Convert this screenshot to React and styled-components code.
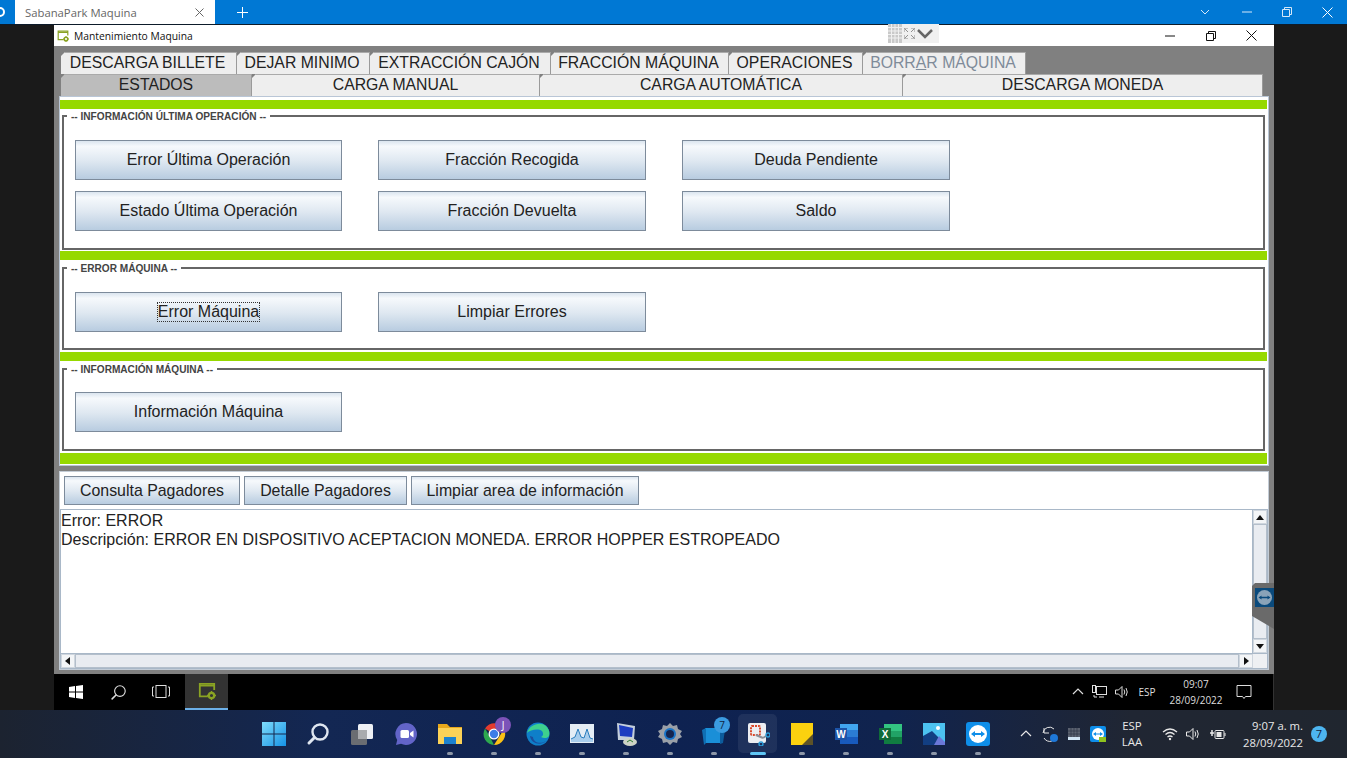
import React from "react";
import styled, { createGlobalStyle } from "styled-components";

const Global = createGlobalStyle`
  html, body { margin: 0; padding: 0; background: #1a1a1a; }
  * { box-sizing: border-box; }
  body { font-family: "Liberation Sans", Arial, sans-serif; overflow: hidden; }
`;

const Page = styled.div`
  width: 1347px; height: 758px; display: flex; flex-direction: column;
  overflow: hidden; position: relative; background: #1a1a1a;
`;

/* ---------- browser strip ---------- */
const BrowserBar = styled.div`
  height: 25px; display: flex; background: #0078d4; border-bottom: 1px solid #0d1b2a;
  flex: none;
`;
const FavSlot = styled.div`
  width: 15px; background: #0078d4; border-bottom-right-radius: 6px; display: flex;
  align-items: center; overflow: hidden; color: #fff;
`;
const BrowserTab = styled.div`
  width: 200px; background: #fff; display: flex; align-items: center; padding: 0 11px 0 10px;
  justify-content: space-between; font: 11.3px "Open Sans", sans-serif; color: #666;
  margin-right: 17px; position: relative;
`;
const BarIcon = styled.div`
  width: ${(p) => p.$w || 40}px; display: flex; align-items: center; justify-content: center;
  padding-right: ${(p) => p.$pr || 0}px;
  color: ${(p) => p.$c || "#d6e8f8"};
`;
const Spacer = styled.div`flex: 1;`;

/* ---------- desktop / remote window ---------- */
const Desktop = styled.div`
  flex: 1; padding-left: 54px; display: flex; min-height: 0;
`;
const Remote = styled.div`
  width: 1220px; display: flex; flex-direction: column; position: relative;
`;
const TitleBar = styled.div`
  height: 21px; background: #fff; display: flex; align-items: center; padding-left: 3px; flex: none;
  font: 10.3px "Open Sans", sans-serif; color: #111; gap: 5px;
`;
const TitleControls = styled.div`
  margin-left: auto; display: flex; color: #111; padding-right: 2px;
`;
const ControlSlot = styled.div`
  width: 41px; height: 20px; display: flex; align-items: center; justify-content: center;
`;
const RemoteToolbar = styled.div`
  position: absolute; left: 834px; top: -1px; width: 51px; height: 19px; background: #f0f0f0;
  display: flex; align-items: center; gap: 2px; color: #666;
`;
const Body = styled.div`
  height: 628px; background: #808080; padding-top: 6px; flex: none;
`;
const TabRow = styled.div`
  display: flex; height: 22px; padding-left: 7px;
`;
const Tab = styled.div`
  width: ${(p) => p.$w}px; height: 22px; padding-right: ${(p) => p.$pr || 0}px;
  background: ${(p) => (p.$active ? "#bcbcbc" : "#eeeeee")};
  color: ${(p) => (p.$off ? "#7f8b99" : "#222")};
  border-right: 1px solid #9a9a9a; border-top: 1px solid #aaa;
  clip-path: polygon(4px 0, 100% 0, 100% 100%, 0 100%, 0 4px);
  font-size: 15.8px; line-height: 20px; text-align: center; white-space: nowrap;
  u { text-decoration-thickness: 1px; }
`;
const Panel = styled.div`
  margin-left: 5px; width: 1210px; background: #fff; border: 1px solid #b9c6d6;
  padding: 3px 1px 1px 0; display: flex; flex-direction: column;
`;
const Band = styled.div`
  height: ${(p) => p.$h || 9}px; background: #96d900; flex: none;
`;
const Group = styled.fieldset`
  margin: ${(p) => p.$mt}px 2px ${(p) => p.$mb}px 2px; min-width: 0;
  border: 2px solid #666; padding: ${(p) => p.$pt}px 10px ${(p) => p.$pb}px 11px;
  display: grid; grid-template-columns: 267px 268px 268px; column-gap: 36px; row-gap: 11px;
  justify-content: start;
`;
const Legend = styled.legend`
  font-size: 10.1px; height: 12px; line-height: 14px; font-weight: bold; color: #444; padding: 0 4px; margin-left: -8px;
  white-space: nowrap;
`;
const Button = styled.div`
  width: ${(p) => (p.$w ? `${p.$w}px` : "100%")}; height: ${(p) => p.$h || 40}px;
  border: 1px solid #7d8b9b;
  background: linear-gradient(#dbe5ef 0%, #f6f9fc 14%, #dfe8f1 52%, #b8cce0 100%);
  display: flex; align-items: center; justify-content: center;
  font-size: ${(p) => p.$fs || 16}px; color: #222; white-space: nowrap; flex: none;
`;
const Focused = styled.span`
  outline: 1px dotted #333; line-height: 18px;
`;
const Lower = styled.div`
  margin: 5px 0 0 5px; width: 1210px; height: 199px; background: #fff;
  border: 1px solid #c3ccd6; padding-top: 4px; display: flex; flex-direction: column;
`;
const ActionRow = styled.div`
  display: flex; gap: 4px; padding-left: 4px; height: 29px; flex: none;
`;
const Frame = styled.div`
  margin: 4px 0 0 0; flex: 1; display: grid; grid-template-columns: 1fr 14px; grid-template-rows: 1fr 14px;
  border: 1px solid #a9b8c8; min-height: 0;
`;
const Output = styled.div`
  font-size: 16px; line-height: 19px; color: #222; padding: 1px 0 0 0; white-space: pre;
  border-bottom: 1px solid #a9b8c8; border-right: 1px solid #a9b8c8;
`;
const VBar = styled.div`
  display: grid; grid-template-rows: 14px 1fr 14px; background: #e9ecf0;
  border-bottom: 1px solid #a9b8c8;
`;
const HBar = styled.div`
  display: grid; grid-template-columns: 14px 1fr 14px; background: #e9ecf0;
`;
const ScrollButton = styled.div`
  display: flex; align-items: center; justify-content: center; background: #f3f5f7;
  border: 1px solid #cfd6de;
`;
const Thumb = styled.div`
  background: #e9ecf1; border: 1px solid #b4bfcb;
`;
const Corner = styled.div`background: #eef0f3;`;

/* ---------- teamviewer side handle ---------- */
const SideHandle = styled.div`
  position: absolute; left: 1198px; top: 558px; width: 22px; height: 46px;
  background: #6a6a6a; clip-path: polygon(3px 0, 100% 0, 100% 100%, 0 72%, 0 3px);
  padding: 5px 0 0 3px;
`;

/* ---------- inner taskbar ---------- */
const InnerBar = styled.div`
  height: 36px; background: #000; display: flex; align-items: center; flex: none; color: #ddd;
  border-right: 1px solid #333;
`;
const InnerSlot = styled.div`
  width: ${(p) => p.$w || 43}px; height: 36px; flex: none; display: flex; align-items: center; justify-content: center;
  margin-left: ${(p) => p.$ml || 0}px;
  background: ${(p) => (p.$active ? "#333" : "transparent")};
  border-bottom: ${(p) => (p.$active ? "2px solid #6cb0e8" : "0")};
`;
const InnerTray = styled.div`
  margin-left: auto; display: flex; align-items: center; height: 36px; font: 10px "Open Sans", sans-serif; color: #ddd;
`;
const TrayCell = styled.div`
  width: ${(p) => p.$w}px; flex: none; display: flex; flex-direction: column; align-items: center; justify-content: center;
  line-height: ${(p) => p.$lh || 15}px; white-space: nowrap;
`;

/* ---------- windows 11 taskbar ---------- */
const Win11Bar = styled.div`
  height: 48px; flex: none; display: flex; align-items: center; padding-left: 252px;
  background: linear-gradient(90deg, #1c2330 0%, #132753 24%, #0e2251 50%, #10234e 66%, #202633 84%, #20262f 100%);
  color: #e8e8e8;
`;
const Dock = styled.div`display: flex;`;
const DockItem = styled.div`
  width: 44px; height: 48px; position: relative; display: flex; align-items: center; justify-content: center;
  &::before {
    content: ""; position: absolute; left: 2px; right: 3px; top: 4px; bottom: 5px; border-radius: 5px;
    background: ${(p) => (p.$active ? "rgba(255,255,255,.07)" : "transparent")};
  }
  & > svg { position: relative; }
`;
const RunDot = styled.span`
  position: absolute; bottom: 3px; left: 50%; transform: translateX(-50%);
  width: ${(p) => (p.$active ? 16 : 6)}px; height: 3px; border-radius: 2px;
  background: ${(p) => (p.$active ? "#5fc6f5" : "#8d97a8")};
`;
const Badge = styled.span`
  position: absolute; top: ${(p) => p.$t}px; right: ${(p) => p.$r}px; width: 16px; height: 16px; border-radius: 50%;
  background: ${(p) => p.$bg}; color: ${(p) => p.$c || "#fff"}; font: 10px/16px "Open Sans", sans-serif; text-align: center;
`;
const Tray = styled.div`
  margin-left: auto; display: flex; align-items: center; height: 48px; padding-right: 20px;
  font: 11.4px "Open Sans", sans-serif; color: #e8e8e8;
`;
const Clock = styled.div`
  width: 72px; text-align: right; font-size: 11.3px; line-height: 17px; white-space: nowrap; margin-right: 8px; flex: none;
`;
const Notif = styled.div`
  width: 16px; height: 16px; border-radius: 50%; background: #4db5f0; color: #11243f; font-size: 11px; line-height: 16px;
  text-align: center; flex: none;
`;

/* ---------- icons ---------- */
const Svg = ({ s = 16, w, h, children, vb }) => (
  <svg width={w || s} height={h || s} viewBox={vb || `0 0 ${s} ${s}`} fill="none" style={{ display: "block", flex: "none" }}>
    {children}
  </svg>
);
const line = { stroke: "currentColor", strokeWidth: 1 };
const Chevron = ({ up, s = 10 }) => (
  <Svg s={s} vb="0 0 10 10"><path d={up ? "M1 7l4-4 4 4" : "M1 3l4 4 4-4"} {...line} /></Svg>
);
const Minus = ({ w = 10, c }) => <Svg w={w} h={10} vb={`0 0 ${w} 10`}><path d={`M0 5h${w}`} stroke={c || "currentColor"} /></Svg>;
const Restore = () => (
  <Svg s={10}><path d="M.5 2.500h7v7h-7zM2.500 2.500v-2h7v7h-2" {...line} /></Svg>
);
const Close = ({ s = 11 }) => <Svg s={s}><path d={`M.5.5l${s - 1} ${s - 1}M${s - .5} .5l-${s - 1} ${s - 1}`} {...line} /></Svg>;
const AppGear = ({ s = 12, c = "#8aa323" }) => (
  <Svg s={20} w={s} h={s}>
    <path d="M11 16H2V2h16v7" stroke={c} strokeWidth="2" />
    <path d="M2 4h16" stroke={c} strokeWidth="2" />
    <circle cx="15" cy="15" r="3" stroke={c} strokeWidth="2.500" />
    <path d="M15 10v2M15 18v2M10 15h2M18 15h2" stroke={c} strokeWidth="1.600" />
  </Svg>
);
const TriUp = () => <Svg s={8}><path d="M4 2l4 5H0z" fill="#111" /></Svg>;
const TriDown = () => <Svg s={8}><path d="M4 7L0 2h8z" fill="#111" /></Svg>;
const TriLeft = () => <Svg s={8}><path d="M1 4l5-4v8z" fill="#111" /></Svg>;
const TriRight = () => <Svg s={8}><path d="M7 4L2 0v8z" fill="#111" /></Svg>;
const TvMark = ({ s = 24, bg = "#0e8ee9", arrow }) => (
  <Svg s={24} w={s} h={s}>
    <rect width="24" height="24" rx="3" fill={bg} />
    <circle cx="12" cy="12" r="9" fill="#fff" />
    <path d="M5 12l4-3v2h6V9l4 3-4 3v-2H9v2z" fill={arrow || bg} />
  </Svg>
);
const WinFlag = ({ s = 14, c = "#fff" }) => (
  <Svg s={14} w={s} h={s}><path d="M0 2l6-1v5.500H0zM7 .9L14 0v6.500H7zM0 7.500h6V13l-6-1zM7 7.500h7V14l-7-1z" fill={c} /></Svg>
);
const Win11 = () => (
  <Svg s={24}>
    <defs><linearGradient id="w11" x1="0" y1="0" x2="1" y2="1"><stop stopColor="#7fdcfb" /><stop offset="1" stopColor="#1592e6" /></linearGradient></defs>
    <path d="M0 0h11.500v11.500H0zM12.500 0H24v11.500H12.500zM0 12.500h11.500V24H0zM12.500 12.500H24V24H12.500z" fill="url(#w11)" />
  </Svg>
);
const SearchIcon = ({ s = 24, c = "#dfe6f0", sw = 2.400 }) => (
  <Svg s={24} w={s} h={s}><circle cx="14" cy="10" r="7.500" stroke={c} strokeWidth={sw} /><path d="M8.500 15.500L3 21" stroke={c} strokeWidth={sw + .6} strokeLinecap="round" /></Svg>
);
const TaskView11 = () => (
  <Svg s={24}><rect x="8" y="2" width="15" height="15" rx="1.500" fill="#eef0f4" /><rect x="1" y="8" width="16" height="15" rx="1.500" fill="#6a6d72" /><rect x="8" y="8" width="9" height="9" fill="#a9abae" /></Svg>
);
const Meet = () => (
  <Svg s={24}><path d="M12 1a11 11 0 1 1-5 20.800L2 23l1.200-5A11 11 0 0 1 12 1z" fill="#6264c8" /><rect x="6.500" y="8" width="8.500" height="8" rx="1.500" fill="#fff" /><path d="M16 11l3.500-2.500v7L16 13z" fill="#fff" /></Svg>
);
const Folder = () => (
  <Svg s={24}><path d="M0 2h9l3 3h12v3H0z" fill="#e8a81c" /><path d="M0 6h24v16H0z" fill="#fcd257" /><rect x="6" y="15" width="12" height="7" fill="#1d82cf" /></Svg>
);
const Chrome = () => (
  <Svg s={24}>
    <path d="M12 12L3 6.500A11 11 0 0 1 22 7H12z" fill="#e33b2e" />
    <path d="M12 23A11 11 0 0 1 3 6.500L8 15z" fill="#2da94f" />
    <path d="M22 7A11 11 0 0 1 12 23l5-8z" fill="#fbc116" />
    <circle cx="12" cy="12" r="5.500" fill="#fff" /><circle cx="12" cy="12" r="4.200" fill="#3d7de8" />
  </Svg>
);
const Edge = () => (
  <Svg s={24}>
    <circle cx="12" cy="12" r="11.500" fill="#0f7fc9" />
    <path d="M1 11C3 3 14-1 20 4c3 3 4 6 3 10-1 2-5 3-8 1 2-1 3-3 1-6-4-3-12-1-15 2z" fill="#3ed08e" />
    <path d="M7 15c0 5 7 8 13 4-5 5-15 3-16-5z" fill="#1b4e9e" />
  </Svg>
);
const Perf = () => (
  <Svg s={24}><rect y="2" width="24" height="19" fill="#e4edf5" /><path d="M1 17l4-2 3-8 3 8 3 1 3-9 3 9 3 1v3H1z" fill="#a8cdec" /><path d="M1 17l4-2 3-8 3 8 3 1 3-9 3 9 3 1" stroke="#2a7dbd" /></Svg>
);
const RemoteApp = () => (
  <Svg s={24}><path d="M3 1l18 3-1 14H4z" fill="#c3cedb" /><path d="M5 3l14 3-1 9-12-1z" fill="#1c3cc0" /><ellipse cx="16" cy="20" rx="7" ry="4" fill="#cdd3c6" /><path d="M13 20l3-2 3 2" stroke="#2d7d31" /></Svg>
);
const Settings = () => (
  <Svg s={24}>
    <path d="M12 1l3 3 4-1 1 4 4 2-2 3 2 3-4 2-1 4-4-1-3 3-3-3-4 1-1-4-4-2 2-3-2-3 4-2 1-4 4 1z" fill="#9aa0a8" />
    <circle cx="12" cy="12" r="6" fill="#1874c8" /><circle cx="12" cy="12" r="4" fill="#13254f" />
  </Svg>
);
const Store = () => (
  <Svg s={24}><path d="M3 6h15v15H3z" fill="#1a8fd8" /><path d="M0 8l4-2v15l-2 2z" fill="#0f6fb4" /><path d="M18 6l5 2-2 13-3 1z" fill="#0c5c9c" /></Svg>
);
const Snip = () => (
  <Svg s={24}>
    <rect x="2" y="1" width="18" height="20" rx="2" fill="#eceef2" />
    <rect x="5" y="4" width="9" height="9" rx="1" fill="none" stroke="#d9482b" strokeWidth="2" strokeDasharray="2 1" />
    <path d="M10 13l7 3M17 16l3-2" stroke="#8a8f98" strokeWidth="2" />
    <circle cx="22" cy="13" r="2" stroke="#2b9bd6" strokeWidth="1.400" /><circle cx="15" cy="22" r="2" stroke="#2b9bd6" strokeWidth="1.400" />
  </Svg>
);
const Sticky = () => (
  <Svg s={24}><rect x="1" y="1" width="22" height="22" fill="#fbd10f" /><path d="M23 12L12 23h11z" fill="#5d5328" /></Svg>
);
const Word = () => (
  <Svg s={24}>
    <rect x="6" y="2" width="18" height="6" fill="#41a5ee" /><rect x="6" y="8" width="18" height="7" fill="#2b7cd3" /><rect x="6" y="15" width="18" height="7" fill="#185abd" />
    <rect x="1" y="6" width="12" height="12" fill="#1c54a8" />
    <text x="7" y="16" fontSize="10" fontWeight="bold" fill="#fff" textAnchor="middle" fontFamily="Liberation Sans">W</text>
  </Svg>
);
const Excel = () => (
  <Svg s={24}>
    <rect x="6" y="2" width="18" height="7" fill="#33c481" /><rect x="6" y="9" width="18" height="6" fill="#21a366" /><rect x="6" y="15" width="18" height="7" fill="#107c41" />
    <rect x="1" y="6" width="12" height="12" fill="#0f6b39" />
    <text x="7" y="16" fontSize="10" fontWeight="bold" fill="#fff" textAnchor="middle" fontFamily="Liberation Sans">X</text>
  </Svg>
);
const Photos = () => (
  <Svg s={24}>
    <rect x="1" y="1" width="22" height="22" fill="#4cc2f0" />
    <circle cx="16" cy="6" r="2" fill="#fff" />
    <path d="M1 14l9-5 13 13v1H1z" fill="#123e82" /><path d="M12 23l5-9 6 6v3z" fill="#6b78d8" />
  </Svg>
);
const TrayChevron = () => <Svg s={12}><path d="M1 8l5-5 5 5" stroke="currentColor" strokeWidth="1.200" /></Svg>;
const Speaker = () => (
  <Svg s={16}><path d="M1.500 6h3L8 2.500v11L4.500 10h-3z" stroke="currentColor" /><path d="M10 5.500q1.500 2.500 0 5M12 4q2.500 4 0 8" stroke="currentColor" /></Svg>
);
const Wifi = () => (
  <Svg s={16}><path d="M1 6q7-6 14 0M3.500 8.500q4.500-4 9 0M5.500 11q2.500-2 5 0" stroke="currentColor" strokeWidth="1.300" /><circle cx="8" cy="13" r="1.200" fill="currentColor" /></Svg>
);
const Battery = () => (
  <Svg s={16}><path d="M0 7h4M2 4v6" stroke="currentColor" strokeWidth="1.500" /><rect x="5" y="4.500" width="9" height="8" rx="1" stroke="currentColor" /><rect x="6.500" y="6" width="5" height="5" fill="currentColor" /><path d="M15 7v3" stroke="currentColor" /></Svg>
);
const Sync = () => (
  <Svg s={18}><path d="M2 8a6.500 6.500 0 0 1 11-4M3 3v5h5M11 16a6.500 6.500 0 0 1-8-3" stroke="#e6e6e6" /><circle cx="13" cy="13" r="4" fill="#1e78d8" /></Svg>
);
const Meter = () => (
  <Svg s={14}><rect x="1" y="1" width="12" height="12" fill="#5b6270" /><path d="M1 4h12M1 7h12M4 1v12M7 1v12M10 1v12" stroke="#2a3040" strokeWidth=".6" /><rect x="1" y="10" width="12" height="3" fill="#d2e5f5" /></Svg>
);
const TvTray = () => (
  <Svg s={16}><rect width="16" height="16" rx="2" fill="#0e8ee9" /><circle cx="8" cy="8" r="6" fill="#fff" /><path d="M3 8l3-2v1.500h4V6l3 2-3 2V8.500H6V10z" fill="#0e8ee9" /><rect x="9" y="11" width="7" height="5" fill="#8fc31f" /></Svg>
);
const Network = () => (
  <Svg s={16}><rect x="4.500" y="2.500" width="10" height="8" stroke="currentColor" /><rect x=".5" y="1.500" width="3" height="7" fill="#000" stroke="currentColor" /><path d="M7 13h5M2 11v2h3" stroke="currentColor" /></Svg>
);
const Bubble = () => (
  <Svg s={16}><path d="M1 1.500h14v11H9.500L8 14.500 6.500 12.500H1z" stroke="currentColor" /></Svg>
);
const TaskView10 = () => (
  <Svg w={18} h={14} vb="0 0 18 14"><rect x="4" y=".5" width="10" height="12" stroke="#ddd" /><path d="M2 2H.5v9H2M16 2h1.500v9H16" stroke="#ddd" /></Svg>
);

const dock = [
  [Win11], [SearchIcon], [TaskView11], [Meet],
  [Folder, true], [Chrome, true, "J"], [Edge, true], [Perf, true], [RemoteApp, true], [Settings, true],
  [Store, true, "7"], [Snip, "active"], [Sticky, true], [Word, true], [Excel, true], [Photos, true],
  [TvMark, true],
];

const topTabs = [
  ["DESCARGA BILLETE", 176], ["DEJAR MINIMO", 133], ["EXTRACCIÓN CAJÓN", 181], ["FRACCIÓN MÁQUINA", 178],
  ["OPERACIONES", 134],
];

export default function App() {
  return (
    <Page>
      <Global />
      <BrowserBar>
        <FavSlot><Svg s={10}><circle cx="0" cy="5" r="4" stroke="#fff" strokeWidth="2" /></Svg></FavSlot>
        <BrowserTab>SabanaPark Maquina<Close s={9} /></BrowserTab>
        <BarIcon $w={20} $c="#fff"><Svg s={11}><path d="M5.500 0v11M0 5.500h11" stroke="currentColor" /></Svg></BarIcon>
        <Spacer />
        <BarIcon $pr={4}><Chevron /></BarIcon>
        <BarIcon><Minus /></BarIcon>
        <BarIcon><Restore /></BarIcon>
        <BarIcon $c="#fff"><Close /></BarIcon>
      </BrowserBar>
      <Desktop>
        <Remote>
          <TitleBar>
            <AppGear />Mantenimiento Maquina
            <TitleControls>
              <ControlSlot><Minus /></ControlSlot>
              <ControlSlot><Restore /></ControlSlot>
              <ControlSlot><Close /></ControlSlot>
            </TitleControls>
          </TitleBar>
          <RemoteToolbar>
            <Svg w={14} h={19} vb="0 0 14 19">
              <rect width="14" height="19" fill="#c9c9c9" />
              <path d="M3.500 0v19M7 0v19M10.500 0v19M0 3.500h14M0 7h14M0 10.500h14M0 14h14" stroke="#f0f0f0" />
            </Svg>
            <Svg s={11}><path d="M0 4V0h4M7 0h4v4M11 7v4H7M4 11H0V7M1 1l3 3M10 1L7 4M10 10L7 7M1 10l3-3" stroke="#777" strokeWidth=".8" /></Svg>
            <Svg s={16}><path d="M1 4l7 7 7-7" stroke="#666" strokeWidth="2.500" /></Svg>
          </RemoteToolbar>
          <Body>
            <TabRow>
              {topTabs.map(([t, w]) => <Tab key={t} $w={w} $pr={2}>{t}</Tab>)}
              <Tab $w={163} $pr={2} $off>BORR<u>A</u>R MÁQUINA</Tab>
            </TabRow>
            <TabRow>
              <Tab $w={191} $active>ESTADOS</Tab>
              <Tab $w={288}>CARGA MANUAL</Tab>
              <Tab $w={363}>CARGA AUTOMÁTICA</Tab>
              <Tab $w={360}>DESCARGA MONEDA</Tab>
            </TabRow>
            <Panel>
              <Band />
              <Group $mt={1} $mb={1} $pt={18} $pb={17}>
                <Legend>-- INFORMACIÓN ÚLTIMA OPERACIÓN --</Legend>
                <Button>Error Última Operación</Button>
                <Button>Fracción Recogida</Button>
                <Button>Deuda Pendiente</Button>
                <Button>Estado Última Operación</Button>
                <Button>Fracción Devuelta</Button>
                <Button>Saldo</Button>
              </Group>
              <Band />
              <Group $mt={2} $mb={2} $pt={18} $pb={16}>
                <Legend>-- ERROR MÁQUINA --</Legend>
                <Button><Focused>Error Máquina</Focused></Button>
                <Button>Limpiar Errores</Button>
              </Group>
              <Band />
              <Group $mt={2} $mb={2} $pt={17} $pb={17}>
                <Legend>-- INFORMACIÓN MÁQUINA --</Legend>
                <Button>Información Máquina</Button>
              </Group>
              <Band $h={11} />
            </Panel>
            <Lower>
              <ActionRow>
                <Button $w={176} $h={29} $fs={15.9}>Consulta Pagadores</Button>
                <Button $w={163} $h={29} $fs={15.9}>Detalle Pagadores</Button>
                <Button $w={228} $h={29} $fs={15.9}>Limpiar area de información</Button>
              </ActionRow>
              <Frame>
                <Output>{"Error: ERROR\nDescripción: ERROR EN DISPOSITIVO ACEPTACION MONEDA. ERROR HOPPER ESTROPEADO"}</Output>
                <VBar>
                  <ScrollButton><TriUp /></ScrollButton>
                  <Thumb />
                  <ScrollButton><TriDown /></ScrollButton>
                </VBar>
                <HBar>
                  <ScrollButton><TriLeft /></ScrollButton>
                  <Thumb />
                  <ScrollButton><TriRight /></ScrollButton>
                </HBar>
                <Corner />
              </Frame>
            </Lower>
          </Body>
          <SideHandle>
            <Svg s={19}>
              <rect width="19" height="19" fill="#0a4a7c" />
              <circle cx="9.500" cy="9.500" r="7.500" fill="#8aa3b8" />
              <path d="M3.500 9.500l3-2v1.300h6V7.500l3 2-3 2v-1.300h-6v1.300z" fill="#0a4a7c" />
            </Svg>
          </SideHandle>
          <InnerBar>
            <InnerSlot $w={43}><WinFlag /></InnerSlot>
            <InnerSlot $w={43}><SearchIcon s={17} c="#ddd" sw={1.600} /></InnerSlot>
            <InnerSlot $w={42}><TaskView10 /></InnerSlot>
            <InnerSlot $w={43} $ml={3} $active><AppGear s={18} /></InnerSlot>
            <InnerTray>
              <TrayCell $w={20}><TrayChevron /></TrayCell>
              <TrayCell $w={24}><Network /></TrayCell>
              <TrayCell $w={20}><Speaker /></TrayCell>
              <TrayCell $w={30}>ESP</TrayCell>
              <TrayCell $w={68} $lh={16}><span>09:07</span><span>28/09/2022</span></TrayCell>
              <TrayCell $w={28}><Bubble /></TrayCell>
              <TrayCell $w={15} />
            </InnerTray>
          </InnerBar>
        </Remote>
      </Desktop>
      <Win11Bar>
        <Dock>
          {dock.map(([Icon, run, badge], i) => (
            <DockItem key={i} $active={run === "active"}>
              <Icon />
              {run && <RunDot $active={run === "active"} />}
              {badge === "J" && <Badge $t={7} $r={5} $bg="#7c53b8">J</Badge>}
              {badge === "7" && <Badge $t={7} $r={6} $bg="#3b9be0" $c="#10233f">7</Badge>}
            </DockItem>
          ))}
        </Dock>
        <Tray>
          <TrayCell $w={24}><TrayChevron /></TrayCell>
          <TrayCell $w={24}><Sync /></TrayCell>
          <TrayCell $w={24}><Meter /></TrayCell>
          <TrayCell $w={24}><TvTray /></TrayCell>
          <TrayCell $w={44} $lh={16}><span>ESP</span><span>LAA</span></TrayCell>
          <TrayCell $w={4} />
          <TrayCell $w={24}><Wifi /></TrayCell>
          <TrayCell $w={22}><Speaker /></TrayCell>
          <TrayCell $w={27}><Battery /></TrayCell>
          <Clock>9:07 a. m.<br />28/09/2022</Clock>
          <Notif>7</Notif>
        </Tray>
      </Win11Bar>
    </Page>
  );
}
